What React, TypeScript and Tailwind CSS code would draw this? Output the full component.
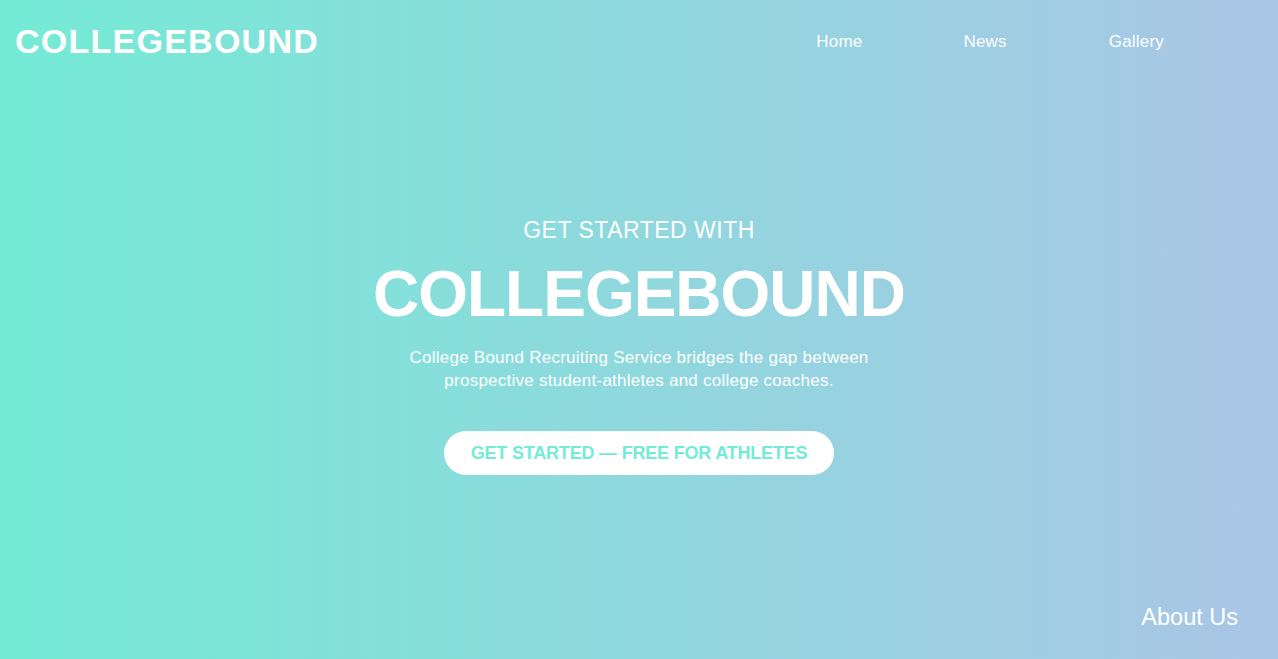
import React from "react";

export default function App() {
  return (
    <div
      className="w-full h-[659px] flex flex-col text-white bg-[linear-gradient(to_right,#74ebd5,#aac5e6)] overflow-hidden"
      style={{ fontFamily: '"Liberation Sans", Arial, sans-serif' }}
    >
      <header className="flex items-center justify-between pl-[15px] pr-[114px] pt-[24px]">
        <div className="text-[34px] leading-none font-bold tracking-[1.25px]">COLLEGEBOUND</div>
        <nav className="flex items-center text-[17px] leading-none tracking-[0.2px]">
          <a>Home</a>
          <a className="ml-[101px]">News</a>
          <a className="ml-[102px]">Gallery</a>
        </nav>
      </header>
      <main className="flex flex-col items-center mt-[161px]">
        <div className="text-[23px] leading-none tracking-[0.5px]">GET STARTED WITH</div>
        <h1 className="text-[64px] leading-none font-bold mt-[20px] tracking-[-1px]">COLLEGEBOUND</h1>
        <p className="text-[17px] leading-[23px] text-center mt-[20px] w-[520px] tracking-[0.25px]">
          College Bound Recruiting Service bridges the gap between
          <br />
          prospective student-athletes and college coaches.
        </p>
        <button className="mt-[39px] h-[44px] px-[27px] rounded-full bg-white text-[#74ebd5] text-[18px] font-bold leading-none tracking-[-0.2px]">
          GET STARTED — FREE FOR ATHLETES
        </button>
      </main>
      <footer className="mt-auto flex justify-end pr-[40px] pb-[30px]">
        <span className="text-[23.5px] leading-none">About Us</span>
      </footer>
    </div>
  );
}
